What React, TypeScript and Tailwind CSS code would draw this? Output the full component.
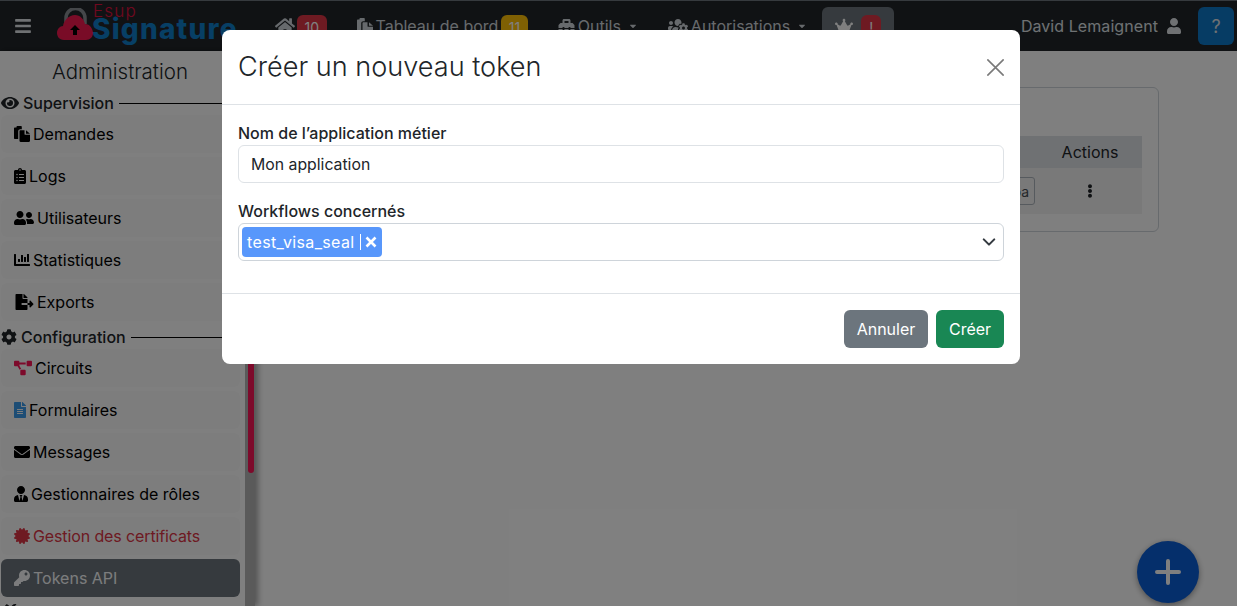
import React from "react";
import { FaBars, FaHome, FaToolbox, FaUsersCog, FaUserFriends, FaCrown, FaUser, FaEye, FaCog, FaClipboardList, FaChartBar, FaFileExport, FaProjectDiagram, FaFileAlt, FaEnvelope, FaUserTie, FaCertificate, FaKey, FaEllipsisV, FaCaretDown, FaTools } from "react-icons/fa";

const font = { fontFamily: "Inter, 'Liberation Sans', sans-serif" };

function Pages({ className }: { className?: string }) {
  return (
    <svg viewBox="0 0 16 16" className={className} fill="currentColor">
      <path d="M0 2.500c0-.6.4-1 1-1h1.500V.8c0-.5.300-.8.800-.8h3.700c.5 0 .8.300.8.800v2.400H6.300C5 3.200 4.200 4 4.200 5.300V13H1c-.6 0-1-.4-1-1z" />
      <path d="M5.500 5.300c0-.6.4-1 1-1h4v3.600c0 .5.300.9.900.9H16v6c0 .7-.4 1.200-1.100 1.200H6.600c-.7 0-1.100-.5-1.100-1.200z" />
      <path d="M12 4.300L16 7.700h-4z" />
    </svg>
  );
}

function Item({ icon, label, active, danger }: { icon: React.ReactNode; label: string; active?: boolean; danger?: boolean }) {
  return (
    <div className={"h-[38px] mb-[4px] mx-[1px] w-[239px] shrink-0 rounded-[6px] flex items-center pl-[13px] text-[16px] leading-none gap-[3px] " + (active ? "bg-[#6c757d] text-[#f8f9fa]" : danger ? "bg-[#fbfbfb] text-[#dc3545] tracking-[-0.12px]" : "bg-[#fbfbfb] text-black")}>
      {icon}
      <span>{label}</span>
    </div>
  );
}

function Section({ icon, label }: { icon: React.ReactNode; label: string }) {
  return (
    <div className="h-[20px] flex items-center gap-[4px] pl-[1px] text-[16px] font-medium text-[#212529] shrink-0">
      {icon}
      <span>{label}</span>
      <div className="flex-1 h-px bg-black ml-[1px]" />
    </div>
  );
}

function Badge({ n, c }: { n: string; c: string }) {
  return <span className={"h-[30px] mt-[8px] px-[7.5px] rounded-[6px] text-[14px] flex items-start pt-[6px] leading-none text-white " + c}>{n}</span>;
}

function Logo() {
  return (
    <div className="relative w-[180px] h-[50px] ml-[24px] shrink-0">
      <svg className="absolute left-0 top-[7px]" width="38" height="34" viewBox="56 8 38 34">
        <path d="M66 24v-6a9.500 9.500 0 0 1 19 0v6" fill="none" stroke="#8a8f94" strokeWidth="3.500" />
        <path d="M64 40C59 40 57 36 57 33C57 29 60 26 63 26C64 20 69 15 75 15C80 15 84 19 85 24C90 24 93 29 93 33C93 37 90 40 86 40Z" fill="#f2184f" />
        <path d="M75 25l5 5h-3v5h-4v-5h-3z" fill="#000" />
      </svg>
      <span className="absolute left-[37px] top-[5px] text-[17px] leading-[11px] font-light text-[#e0103f] tracking-[1.2px]">Esup</span>
      <span className="absolute left-[36px] top-[17px] text-[28px] leading-[23px] font-extrabold text-[#0f7ecb] tracking-[1.2px]">Signature</span>
    </div>
  );
}

export default function App() {
  return (
    <div className="relative h-[606px] w-[1237px] overflow-hidden bg-white flex flex-col" style={font}>
      <header className="h-[51px] shrink-0 bg-[#212529] border-t border-[#6c757d] flex items-center text-[#ced4da] text-[16px]">
        <FaBars className="ml-[14px] w-[18px] h-[18px] text-[#dee2e6] shrink-0" />
        <Logo />
        <div className="ml-[39px] flex items-center gap-[2px]"><FaHome className="w-[20px] h-[18px]" /><Badge n="10" c="bg-[#dc3545]" /></div>
        <div className="ml-[30px] flex items-center gap-[3px]"><Pages className="w-[16px] h-[16px]" /><span>Tableau de bord</span><Badge n="11" c="bg-[#ffc107]" /></div>
        <div className="ml-[30px] flex items-center gap-[3px]"><FaToolbox className="w-[17px] h-[16px]" /><span>Outils</span><FaCaretDown className="w-[10px] h-[10px] ml-[4px]" /></div>
        <div className="ml-[30px] flex items-center gap-[3px]"><FaUsersCog className="w-[20px] h-[16px]" /><span>Autorisations</span><FaCaretDown className="w-[10px] h-[10px] ml-[4px]" /></div>
        <div className="ml-[15px] h-[38px] w-[72px] rounded-[6px] bg-[#6c757d] flex items-center pl-[13px] gap-[8px]"><FaCrown className="w-[18px] h-[16px] text-white" /><span className="bg-[#dc3545] rounded-[6px] w-[20px] h-[30px] mt-[8px] flex justify-center pt-[6px] text-white text-[14px] leading-none">!</span></div>
        <div className="ml-auto flex items-center gap-[9px] text-[#dee2e6]"><span className="tracking-[0.07px]">David Lemaignent</span><FaUser className="w-[14px] h-[16px]" /></div>
        <div className="ml-[17px] mr-[3px] w-[36px] h-[38px] rounded-[6px] bg-[#0d78c8] flex items-center justify-center text-[#dee2e6] text-[18px]">?</div>
      </header>
      <div className="flex-1 flex min-h-0">
        <aside className="w-[255px] shrink-0 flex min-h-0 overflow-hidden shadow-[3px_0_6px_rgba(0,0,0,0.35)]">
          <div className="w-[245px] shrink-0 flex flex-col">
            <div className="h-[42px] shrink-0 flex items-center justify-center text-[20.5px] font-light text-[#212529] pt-[1px] pr-[5px]">Administration</div>
            <Section icon={<FaEye className="w-[18px] h-[16px]" />} label="Supervision" />
            <div className="h-[2px] shrink-0" />
            <Item icon={<Pages className="w-[16px] h-[16px]" />} label="Demandes" />
            <Item icon={<FaClipboardList className="w-[12px] h-[16px]" />} label="Logs" />
            <Item icon={<FaUserFriends className="w-[20px] h-[16px]" />} label="Utilisateurs" />
            <Item icon={<FaChartBar className="w-[16px] h-[16px]" />} label="Statistiques" />
            <Item icon={<FaFileExport className="w-[19px] h-[16px] ml-[1px]" />} label="Exports" />
            <div className="mt-[2px]"><Section icon={<FaCog className="w-[16px] h-[16px]" />} label="Configuration" /></div>
            <div className="h-[2px] shrink-0" />
            <Item icon={<FaProjectDiagram className="w-[18px] h-[16px] text-[#fa1557]" />} label="Circuits" />
            <Item icon={<FaFileAlt className="w-[12px] h-[16px] text-[#3b9bea]" />} label="Formulaires" />
            <Item icon={<FaEnvelope className="w-[16px] h-[16px]" />} label="Messages" />
            <Item icon={<FaUserTie className="w-[14px] h-[16px]" />} label="Gestionnaires de rôles" />
            <Item danger icon={<FaCertificate className="w-[16px] h-[16px]" />} label="Gestion des certificats" />
            <Item active icon={<FaKey className="w-[16px] h-[16px]" />} label="Tokens API" />
            <div className="pl-[5px] pt-[3px]"><FaTools className="w-[14px] h-[14px] text-[#212529]" /></div>
          </div>
          <div className="w-[10px] shrink-0 bg-[#b4b4b4] pl-[3px] pr-[1px]">
            <div className="h-[422px] rounded-b-[4px] bg-[#fa1557]" />
          </div>
        </aside>
        <main className="flex-1 min-w-0 pt-[36px] pr-[78px] pl-[30px]">
          <div className="h-[145px] border border-[#ced4da] rounded-[6px] pt-[48px] px-[16px]">
            <div className="h-[32px] bg-[#dee2e6] flex items-center justify-end text-[16px] text-[#212529]"><span className="w-[104px] text-center">Actions</span></div>
            <div className="h-[46px] bg-[#f2f2f2] flex items-center justify-end">
              <span className="border border-[#adb5bd] rounded-[3px] h-[28px] px-[5px] flex items-center text-[14px] text-[#495057] mr-[3px]">pa</span>
              <span className="w-[104px] flex justify-center"><FaEllipsisV className="w-[14px] h-[14px] text-[#212529]" /></span>
            </div>
          </div>
        </main>
      </div>
      <div className="absolute left-[1137px] top-[541px] w-[62px] h-[62px] rounded-full bg-[#0b5ed7] shadow-[0_2px_6px_rgba(0,0,0,0.4)] flex items-center justify-center">
        <svg width="26" height="26" viewBox="0 0 26 26"><path d="M13 2v22M2 13h22" stroke="#fff" strokeWidth="4" strokeLinecap="round" /></svg>
      </div>
      <div className="absolute inset-0 bg-black/50" />
      <div className="absolute left-[222px] top-[30px] w-[798px] h-[334px] bg-white rounded-[8px] flex flex-col text-[#212529]">
        <div className="h-[75px] shrink-0 border-b border-[#dee2e6] flex items-center justify-between pl-[16px] pr-[16px]">
          <span className="text-[27.1px] font-light">Créer un nouveau token</span>
          <svg width="17" height="17" viewBox="0 0 16 16"><path d="M.3.3l15.400 15.400M15.700.3L.3 15.700" stroke="#7a7a7a" strokeWidth="1.500" /></svg>
        </div>
        <div className="h-[189px] shrink-0 border-b border-[#dee2e6] px-[16px] pt-[18px]">
          <div className="text-[16px] font-medium leading-[20px] mb-[2px]">Nom de l’application métier</div>
          <div className="h-[38px] border border-[#dee2e6] rounded-[6px] flex items-center pl-[12px] pt-[2px] text-[15.8px]">Mon application</div>
          <div className="text-[16px] font-medium leading-[20px] mt-[18px] mb-[2px]">Workflows concernés</div>
          <div className="h-[38px] border border-[#ced4da] rounded-[6px] flex items-center pl-[3px] pr-[7px]">
            <div className="h-[30px] bg-[#5897fb] rounded-[4px] flex items-center text-white text-[16px] pl-[5px] pr-[5px]">
              <span className="tracking-[0.36px]">test_visa_seal</span>
              <span className="ml-[5px] w-px h-[16px] bg-white" />
              <svg width="12" height="12" viewBox="0 0 12 12" className="ml-[4px]"><path d="M1.500 1.500l9 9M10.500 1.500l-9 9" stroke="#fff" strokeWidth="2.600" /></svg>
            </div>
            <svg width="14" height="14" viewBox="0 0 16 16" className="ml-auto"><path d="M2 5l6 6 6-6" fill="none" stroke="#343a40" strokeWidth="2.400" strokeLinecap="round" strokeLinejoin="round" /></svg>
          </div>
        </div>
        <div className="flex-1 flex items-center justify-end gap-[8px] px-[16px]">
          <div className="h-[38px] w-[84px] rounded-[6px] bg-[#6c757d] text-white flex items-center justify-center text-[16px]">Annuler</div>
          <div className="h-[38px] w-[68px] rounded-[6px] bg-[#198754] text-white flex items-center justify-center text-[16px]">Créer</div>
        </div>
      </div>
    </div>
  );
}
